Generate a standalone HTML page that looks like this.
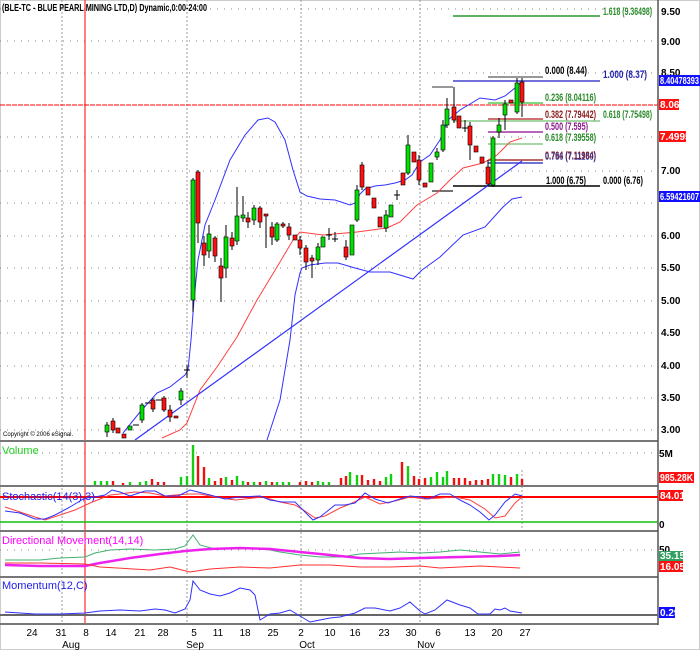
<!DOCTYPE html>
<html><head><meta charset="utf-8"><style>
html,body{margin:0;padding:0;background:#fff;}
svg{display:block;font-family:"Liberation Sans",sans-serif;font-weight:bold;}
.g{fill:#00e000;stroke:#000;stroke-width:.6}
.r{fill:#ff1010;stroke:#000;stroke-width:.6}
.w{stroke:#000;stroke-width:1}
.grid{stroke:#888;stroke-width:1;stroke-dasharray:1 6}
.vg{stroke:#999;stroke-width:1;stroke-dasharray:2 2}
.sep{stroke:#777;stroke-width:2}
.ax{font-size:10px;fill:#000}
.fb{font-size:11px;font-weight:bold}
</style></head><body>
<svg width="700" height="650" viewBox="0 0 700 650" xmlns="http://www.w3.org/2000/svg">
<rect x="0" y="0" width="700" height="650" fill="#fff"/>
<rect x="0.5" y="0.5" width="699" height="649" fill="none" stroke="#ccc"/>
<g class="grid">
<line x1="0" y1="9" x2="655" y2="9"/><line x1="0" y1="41" x2="655" y2="41"/><line x1="0" y1="73" x2="655" y2="73"/>
<line x1="0" y1="137" x2="655" y2="137"/><line x1="0" y1="171" x2="655" y2="171"/><line x1="0" y1="203" x2="655" y2="203"/>
<line x1="0" y1="236" x2="655" y2="236"/><line x1="0" y1="268" x2="655" y2="268"/><line x1="0" y1="301" x2="655" y2="301"/>
<line x1="0" y1="333" x2="655" y2="333"/><line x1="0" y1="366" x2="655" y2="366"/><line x1="0" y1="398" x2="655" y2="398"/>
<line x1="0" y1="430" x2="655" y2="430"/><line x1="0" y1="453" x2="655" y2="453"/><line x1="0" y1="550" x2="655" y2="550"/>
</g>
<g class="vg">
<line x1="62" y1="0" x2="62" y2="624"/><line x1="187" y1="0" x2="187" y2="624"/><line x1="301" y1="0" x2="301" y2="624"/>
<line x1="420" y1="0" x2="420" y2="624"/><line x1="522" y1="470" x2="522" y2="530"/>
</g>
<line x1="85" y1="0" x2="85" y2="624" stroke="#f00" stroke-width="1"/>
<line x1="0" y1="105" x2="658" y2="105" stroke="#f00" stroke-width="1" stroke-dasharray="5 1"/>
<text x="2" y="11" font-size="10" textLength="205" lengthAdjust="spacingAndGlyphs">(BLE-TC - BLUE PEARL MINING LTD,D) Dynamic,0:00-24:00</text>
<line x1="453" y1="16" x2="600" y2="16" stroke="#2a9a2a" stroke-width="1.5"/>
<text class="fb" x="603" y="15" fill="#2a8a2a" textLength="49" lengthAdjust="spacingAndGlyphs">1.618 (9.36498)</text>
<line x1="488" y1="77" x2="543" y2="77" stroke="#777" stroke-width="1.5"/>
<text class="fb" x="545" y="74" fill="#000" textLength="42" lengthAdjust="spacingAndGlyphs">0.000 (8.44)</text>
<line x1="453" y1="81" x2="600" y2="81" stroke="#4444cc" stroke-width="1.5"/>
<text class="fb" x="603" y="78" fill="#2222aa" textLength="44" lengthAdjust="spacingAndGlyphs">1.000 (8.37)</text>
<line x1="432" y1="87" x2="453" y2="87" stroke="#777" stroke-width="1.5"/>
<line x1="488" y1="103" x2="543" y2="103" stroke="#5c5" stroke-width="1.5"/>
<text class="fb" x="545" y="101" fill="#2a8a2a" textLength="51" lengthAdjust="spacingAndGlyphs">0.236 (8.04116)</text>
<line x1="488" y1="119" x2="543" y2="119" stroke="#b44" stroke-width="1.5"/>
<text class="fb" x="545" y="118" fill="#8a1a1a" textLength="51" lengthAdjust="spacingAndGlyphs">0.382 (7.79442)</text>
<line x1="453" y1="121" x2="600" y2="121" stroke="#8c8" stroke-width="1.5"/>
<text class="fb" x="603" y="118" fill="#2a8a2a" textLength="49" lengthAdjust="spacingAndGlyphs">0.618 (7.75498)</text>
<line x1="488" y1="132" x2="543" y2="132" stroke="#a030a0" stroke-width="1.5"/>
<text class="fb" x="545" y="130" fill="#8a1a8a" textLength="43" lengthAdjust="spacingAndGlyphs">0.500 (7.595)</text>
<line x1="488" y1="144" x2="543" y2="144" stroke="#8c8" stroke-width="1.5"/>
<text class="fb" x="545" y="141" fill="#2a8a2a" textLength="51" lengthAdjust="spacingAndGlyphs">0.618 (7.39558)</text>
<line x1="488" y1="160" x2="543" y2="160" stroke="#a33" stroke-width="1.5"/>
<line x1="488" y1="163" x2="543" y2="163" stroke="#44c" stroke-width="1.5"/>
<text class="fb" x="545" y="159" fill="#8a1a1a" textLength="51" lengthAdjust="spacingAndGlyphs">0.764 (7.11984)</text>
<text class="fb" x="545" y="160" fill="#2a2a9a" fill-opacity=".7" textLength="51" lengthAdjust="spacingAndGlyphs">0.786 (7.11160)</text>
<line x1="453" y1="186" x2="600" y2="186" stroke="#000" stroke-width="1.5"/>
<line x1="432" y1="191" x2="453" y2="191" stroke="#444" stroke-width="1.5"/>
<text class="fb" x="546" y="184" fill="#000" textLength="40" lengthAdjust="spacingAndGlyphs">1.000 (6.75)</text>
<text class="fb" x="603" y="184" fill="#000" textLength="40" lengthAdjust="spacingAndGlyphs">0.000 (6.76)</text>
<polyline fill="none" stroke="#3030ff" stroke-width="1" points="123,433 140,412 157,393 170,387 185,375 188,370 191,340 194,300 198,260 205,225 215,200 230,160 245,135 258,120 268,118 275,122 285,140 293,170 300,192 307,196 320,199 335,200 350,205 355,203 360,194 365,189 375,186 385,185 395,183 405,180 412,175 420,162 430,155 440,140 448,120 460,110 480,98 495,100 505,96 515,88 522,82"/>
<polyline fill="none" stroke="#3030ff" stroke-width="1" points="267,440 280,400 290,340 295,295 300,273 302,268 310,265 325,263 338,263 355,268 370,272 390,272 413,279 422,270 440,257 463,235 485,227 503,207 512,199 522,197"/>
<polyline fill="none" stroke="#ff4040" stroke-width="1" points="162,438 180,430 187,423 200,390 217,367 237,337 257,300 277,267 293,240 300,232 323,235 357,232 387,228 400,222 417,205 437,193 450,180 463,168 483,163 497,155 510,142 522,138"/>
<line x1="135" y1="440" x2="522" y2="161" stroke="#3030ff" stroke-width="1.2"/>
<g class="w">
<line x1="107" y1="422" x2="107" y2="437"/><line x1="113" y1="418" x2="113" y2="433"/><line x1="142" y1="403" x2="142" y2="423"/>
<line x1="153" y1="398" x2="153" y2="412"/><line x1="164" y1="396" x2="164" y2="412"/><line x1="170" y1="405" x2="170" y2="422"/>
<line x1="181" y1="388" x2="181" y2="405"/><line x1="187" y1="365" x2="187" y2="378"/><line x1="193" y1="178" x2="193" y2="312"/>
<line x1="198" y1="170" x2="198" y2="243"/><line x1="204" y1="236" x2="204" y2="266"/><line x1="209" y1="225" x2="209" y2="258"/>
<line x1="215" y1="236" x2="215" y2="262"/><line x1="221" y1="258" x2="221" y2="302"/><line x1="226" y1="225" x2="226" y2="278"/>
<line x1="232" y1="232" x2="232" y2="250"/><line x1="237" y1="187" x2="237" y2="245"/><line x1="243" y1="196" x2="243" y2="222"/>
<line x1="248" y1="212" x2="248" y2="228"/><line x1="254" y1="205" x2="254" y2="225"/><line x1="260" y1="206" x2="260" y2="228"/>
<line x1="266" y1="214" x2="266" y2="248"/><line x1="272" y1="222" x2="272" y2="245"/><line x1="277" y1="222" x2="277" y2="242"/>
<line x1="283" y1="222" x2="283" y2="228"/><line x1="289" y1="223" x2="289" y2="240"/><line x1="300" y1="236" x2="300" y2="255"/>
<line x1="306" y1="245" x2="306" y2="270"/><line x1="312" y1="255" x2="312" y2="278"/><line x1="318" y1="243" x2="318" y2="265"/>
<line x1="329" y1="228" x2="329" y2="240"/><line x1="335" y1="232" x2="335" y2="242"/><line x1="346" y1="240" x2="346" y2="260"/>
<line x1="357" y1="185" x2="357" y2="222"/><line x1="362" y1="162" x2="362" y2="190"/><line x1="386" y1="210" x2="386" y2="232"/>
<line x1="397" y1="190" x2="397" y2="200"/><line x1="408" y1="135" x2="408" y2="175"/><line x1="419" y1="155" x2="419" y2="185"/>
<line x1="437" y1="148" x2="437" y2="160"/><line x1="443" y1="120" x2="443" y2="152"/><line x1="447" y1="98" x2="447" y2="128"/>
<line x1="454" y1="87" x2="454" y2="123"/><line x1="465" y1="120" x2="465" y2="132"/><line x1="470" y1="122" x2="470" y2="160"/>
<line x1="488" y1="160" x2="488" y2="186"/><line x1="493" y1="136" x2="493" y2="187"/><line x1="499" y1="118" x2="499" y2="138"/>
<line x1="505" y1="100" x2="505" y2="130"/><line x1="517" y1="78" x2="517" y2="114"/><line x1="522" y1="78" x2="522" y2="117"/>
<line x1="133" y1="425" x2="139" y2="425"/><line x1="145" y1="403" x2="151" y2="403"/><line x1="156" y1="400" x2="162" y2="400"/>
<line x1="184" y1="370" x2="190" y2="370"/><line x1="326" y1="235" x2="332" y2="235"/><line x1="332" y1="239" x2="338" y2="239"/>
<line x1="394" y1="195" x2="400" y2="195"/><line x1="462" y1="128" x2="468" y2="128"/>
</g>
<rect class="g" x="105" y="425" width="4" height="7"/><rect class="r" x="111" y="421" width="4" height="9"/>
<rect class="r" x="116" y="428" width="4" height="5"/><rect class="r" x="122" y="434" width="4" height="4"/>
<rect class="g" x="128" y="426" width="4" height="4"/><rect class="g" x="140" y="405" width="4" height="15"/>
<rect class="r" x="151" y="400" width="4" height="9"/><rect class="r" x="162" y="398" width="4" height="12"/>
<rect class="r" x="168" y="410" width="4" height="7"/><rect class="r" x="174" y="416" width="4" height="2"/>
<rect class="g" x="179" y="391" width="4" height="9"/>
<rect class="g" x="191" y="180" width="4" height="120"/><rect class="r" x="196" y="172" width="4" height="51"/>
<rect class="r" x="202" y="243" width="4" height="12"/><rect class="g" x="207" y="234" width="4" height="17"/>
<rect class="r" x="213" y="238" width="4" height="18"/><rect class="r" x="219" y="266" width="4" height="12"/>
<rect class="g" x="224" y="237" width="4" height="31"/><rect class="r" x="230" y="238" width="4" height="8"/>
<rect class="g" x="235" y="216" width="4" height="25"/><rect class="g" x="241" y="215" width="4" height="3"/>
<rect class="r" x="246" y="218" width="4" height="4"/><rect class="g" x="252" y="208" width="4" height="12"/>
<rect class="r" x="258" y="208" width="4" height="14"/><rect class="r" x="264" y="214" width="4" height="2"/>
<rect class="r" x="270" y="227" width="4" height="10"/><rect class="g" x="275" y="224" width="4" height="16"/>
<rect class="r" x="281" y="224" width="4" height="2"/><rect class="r" x="287" y="227" width="4" height="8"/>
<rect class="r" x="293" y="235" width="4" height="5"/><rect class="r" x="298" y="240" width="4" height="8"/>
<rect class="r" x="304" y="248" width="4" height="14"/><rect class="r" x="310" y="258" width="4" height="3"/>
<rect class="g" x="316" y="247" width="4" height="13"/><rect class="g" x="321" y="237" width="4" height="10"/>
<rect class="r" x="344" y="247" width="4" height="10"/><rect class="g" x="350" y="225" width="4" height="30"/>
<rect class="g" x="355" y="190" width="4" height="30"/><rect class="r" x="360" y="165" width="4" height="22"/>
<rect class="r" x="366" y="187" width="4" height="8"/><rect class="r" x="372" y="198" width="4" height="10"/>
<rect class="r" x="378" y="217" width="4" height="10"/><rect class="g" x="384" y="215" width="4" height="13"/>
<rect class="g" x="389" y="205" width="4" height="12"/><rect class="r" x="401" y="173" width="4" height="12"/>
<rect class="g" x="406" y="145" width="4" height="28"/><rect class="r" x="412" y="152" width="4" height="10"/>
<rect class="r" x="417" y="160" width="4" height="20"/><rect class="r" x="423" y="183" width="4" height="4"/>
<rect class="g" x="429" y="163" width="4" height="19"/><rect class="g" x="435" y="152" width="4" height="5"/>
<rect class="g" x="441" y="125" width="4" height="25"/><rect class="g" x="445" y="109" width="4" height="16"/>
<rect class="r" x="452" y="107" width="4" height="13"/><rect class="r" x="457" y="116" width="4" height="12"/>
<rect class="r" x="468" y="126" width="4" height="19"/><rect class="r" x="474" y="146" width="4" height="6"/>
<rect class="r" x="480" y="157" width="4" height="6"/><rect class="r" x="486" y="167" width="4" height="17"/>
<rect class="g" x="491" y="138" width="4" height="47"/><rect class="g" x="497" y="125" width="4" height="7"/>
<rect class="g" x="503" y="104" width="4" height="11"/><rect class="r" x="509" y="100" width="4" height="3"/>
<rect class="g" x="515" y="83" width="4" height="29"/><rect class="r" x="520" y="82" width="4" height="20"/>
<text x="3" y="436" font-size="6" font-weight="normal" fill="#000">Copyright © 2006 eSignal.</text>
<g class="sep">
<line x1="0" y1="441" x2="658" y2="441"/><line x1="0" y1="486" x2="658" y2="486"/>
<line x1="0" y1="531" x2="658" y2="531"/><line x1="0" y1="577" x2="658" y2="577"/><line x1="0" y1="624" x2="658" y2="624"/>
</g>
<line x1="658" y1="0" x2="658" y2="625" stroke="#555" stroke-width="1.5"/>
<text x="2" y="454" font-size="11" fill="#20d020" font-weight="normal">Volume</text>
<g stroke-width="2.4">
<g stroke="#10d010">
<line x1="95" y1="485" x2="95" y2="481"/><line x1="101" y1="485" x2="101" y2="481"/><line x1="107" y1="485" x2="107" y2="481"/>
<line x1="130" y1="485" x2="130" y2="482"/><line x1="140" y1="485" x2="140" y2="482"/><line x1="146" y1="485" x2="146" y2="481"/>
<line x1="181" y1="485" x2="181" y2="477"/><line x1="187" y1="485" x2="187" y2="476"/><line x1="193" y1="485" x2="193" y2="445"/>
<line x1="209" y1="485" x2="209" y2="478"/><line x1="226" y1="485" x2="226" y2="477"/><line x1="237" y1="485" x2="237" y2="476"/>
<line x1="243" y1="485" x2="243" y2="481"/><line x1="254" y1="485" x2="254" y2="482"/><line x1="266" y1="485" x2="266" y2="481"/>
<line x1="277" y1="485" x2="277" y2="482"/><line x1="283" y1="485" x2="283" y2="482"/><line x1="289" y1="485" x2="289" y2="482"/>
<line x1="318" y1="485" x2="318" y2="481"/><line x1="323" y1="485" x2="323" y2="482"/><line x1="329" y1="485" x2="329" y2="482"/>
<line x1="350" y1="485" x2="350" y2="472"/><line x1="357" y1="485" x2="357" y2="475"/><line x1="386" y1="485" x2="386" y2="477"/>
<line x1="391" y1="485" x2="391" y2="474"/><line x1="408" y1="485" x2="408" y2="466"/><line x1="431" y1="485" x2="431" y2="477"/>
<line x1="437" y1="485" x2="437" y2="472"/><line x1="443" y1="485" x2="443" y2="477"/><line x1="447" y1="485" x2="447" y2="471"/>
<line x1="493" y1="485" x2="493" y2="474"/><line x1="499" y1="485" x2="499" y2="474"/><line x1="505" y1="485" x2="505" y2="475"/>
<line x1="517" y1="485" x2="517" y2="474"/>
</g>
<g stroke="#f01010">
<line x1="113" y1="485" x2="113" y2="481"/><line x1="123" y1="485" x2="123" y2="483"/><line x1="152" y1="485" x2="152" y2="479"/>
<line x1="158" y1="485" x2="158" y2="482"/><line x1="164" y1="485" x2="164" y2="482"/><line x1="198" y1="485" x2="198" y2="456"/>
<line x1="204" y1="485" x2="204" y2="467"/><line x1="215" y1="485" x2="215" y2="481"/><line x1="221" y1="485" x2="221" y2="478"/>
<line x1="232" y1="485" x2="232" y2="480"/><line x1="248" y1="485" x2="248" y2="482"/><line x1="260" y1="485" x2="260" y2="482"/>
<line x1="272" y1="485" x2="272" y2="482"/><line x1="300" y1="485" x2="300" y2="482"/><line x1="306" y1="485" x2="306" y2="481"/>
<line x1="312" y1="485" x2="312" y2="482"/><line x1="341" y1="485" x2="341" y2="478"/><line x1="346" y1="485" x2="346" y2="476"/>
<line x1="362" y1="485" x2="362" y2="475"/><line x1="368" y1="485" x2="368" y2="480"/><line x1="374" y1="485" x2="374" y2="479"/>
<line x1="380" y1="485" x2="380" y2="481"/><line x1="402" y1="485" x2="402" y2="462"/><line x1="414" y1="485" x2="414" y2="476"/>
<line x1="419" y1="485" x2="419" y2="479"/><line x1="425" y1="485" x2="425" y2="478"/><line x1="454" y1="485" x2="454" y2="478"/>
<line x1="459" y1="485" x2="459" y2="478"/><line x1="465" y1="485" x2="465" y2="478"/><line x1="470" y1="485" x2="470" y2="481"/>
<line x1="476" y1="485" x2="476" y2="480"/><line x1="482" y1="485" x2="482" y2="480"/><line x1="488" y1="485" x2="488" y2="479"/>
<line x1="511" y1="485" x2="511" y2="477"/><line x1="522" y1="485" x2="522" y2="479"/>
</g></g>
<line x1="0" y1="497" x2="658" y2="497" stroke="#f00" stroke-width="2"/>
<line x1="0" y1="522" x2="658" y2="522" stroke="#10c010" stroke-width="1.5"/>
<text x="2" y="500" font-size="11" fill="#2020ee" font-weight="normal">Stochastic(14(3),3)</text>
<polyline fill="none" stroke="#ff4040" stroke-width="1" points="5,507 20,512 35,517 45,520 60,515 75,510 90,503 100,499 110,495 120,494 135,492 150,493 165,496 175,495 190,494 200,494 215,497 235,500 245,499 262,497 270,499 280,502 295,505 305,511 315,518 325,516 340,508 350,504 365,497 380,504 395,501 410,497 425,499 440,498 455,497 470,500 485,509 495,518 505,516 515,503 522,497"/>
<polyline fill="none" stroke="#3030ff" stroke-width="1" points="5,511 20,513 35,519 45,519 55,515 70,507 85,498 95,497 105,495 112,490 120,492 130,496 145,491 155,491 165,496 178,496 190,490 198,492 210,495 225,499 240,497 260,496 270,500 282,502 295,502 305,512 313,520 320,517 335,505 345,505 355,503 365,493 375,499 388,503 400,499 410,496 420,497 428,499 440,494 450,494 460,500 470,505 480,512 489,520 495,515 505,502 515,494 522,496"/>
<text x="2" y="544" font-size="11" fill="#ff00ff" font-weight="normal">Directional Movement(14,14)</text>
<polyline fill="none" stroke="#40b070" stroke-width="1" points="5,560 40,560 60,558 85,557 95,553 110,550 130,549 155,550 175,549 185,546 193,535 200,545 215,549 240,549 260,548 280,552 300,555 320,557 340,557 360,554 380,553 400,552 420,553 440,552 460,550 480,552 500,554 520,552"/>
<polyline fill="none" stroke="#ee22ee" stroke-width="2.5" points="5,565 40,566 85,566 100,563 130,558 160,554 185,551 210,549 240,548 270,549 300,552 330,555 360,558 390,559 420,558 460,557 500,556 520,555"/>
<polyline fill="none" stroke="#ff3030" stroke-width="1" points="5,563 40,563 85,564 100,567 150,570 170,567 190,572 210,569 240,567 270,568 300,565 330,565 360,567 390,567 420,566 440,568 460,567 480,566 500,567 520,568"/>
<text x="2" y="589" font-size="11" fill="#2020ee" font-weight="normal">Momentum(12,C)</text>
<line x1="0" y1="615" x2="658" y2="615" stroke="#666" stroke-width="2"/>
<polyline fill="none" stroke="#3030ff" stroke-width="1" points="5,612 20,613 35,614 60,614 85,613 100,611 120,610 140,611 155,609 165,610 175,613 185,609 190,600 193,581 200,590 210,594 220,596 230,593 240,588 250,590 255,595 260,620 270,614 280,613 290,610 300,616 310,622 320,620 330,618 340,617 355,613 365,608 375,608 390,611 400,608 410,602 420,611 425,614 435,610 447,600 460,605 470,608 478,614 490,614 495,609 500,610 505,608 510,611 522,613"/>
<g class="ax">
<text x="661" y="15">9.50</text><text x="661" y="45">9.00</text><text x="661" y="76">8.50</text>
<text x="661" y="174">7.00</text><text x="661" y="239">6.00</text><text x="661" y="271">5.50</text>
<text x="661" y="304">5.00</text><text x="661" y="336">4.50</text><text x="661" y="369">4.00</text>
<text x="661" y="401">3.50</text><text x="661" y="433">3.00</text><text x="659" y="457">5M</text>
<text x="659" y="528">0</text><text x="659" y="553">50</text>
</g>
<rect x="659" y="75" width="41" height="11" fill="#1010ff"/><text x="660" y="84" font-size="10" fill="#fff" textLength="39" lengthAdjust="spacingAndGlyphs">8.40478393</text>
<rect x="659" y="99" width="20" height="11" fill="#ff1010"/><text x="660" y="108" font-size="10" fill="#fff">8.06</text>
<rect x="659" y="131" width="27" height="11" fill="#ff1010"/><text x="660" y="140" font-size="10" fill="#fff">7.4995</text>
<rect x="659" y="191" width="41" height="11" fill="#1010ff"/><text x="660" y="200" font-size="10" fill="#fff" textLength="39" lengthAdjust="spacingAndGlyphs">6.59421607</text>
<rect x="659" y="472" width="35" height="11" fill="#ff1010"/><text x="660" y="481" font-size="10" fill="#fff" textLength="33" lengthAdjust="spacingAndGlyphs">985.28K</text>
<rect x="659" y="490" width="24" height="11" fill="#ff1010"/><text x="660" y="499" font-size="10" fill="#fff">84.01</text>
<rect x="659" y="551" width="24" height="10" fill="#30a060"/><text x="660" y="559" font-size="10" fill="#fff">35.15</text>
<rect x="659" y="561" width="24" height="11" fill="#ff1010"/><text x="660" y="570" font-size="10" fill="#fff">16.05</text>
<rect x="659" y="607" width="16" height="11" fill="#1010ff"/><text x="660" y="616" font-size="10" fill="#fff">0.29</text>
<g font-size="10" font-weight="normal" fill="#000" text-anchor="middle">
<text x="32" y="636">24</text><text x="61" y="636">31</text><text x="86" y="636">8</text><text x="111" y="636">14</text>
<text x="140" y="636">21</text><text x="163" y="636">28</text><text x="194" y="636">5</text><text x="218" y="636">11</text>
<text x="245" y="636">18</text><text x="273" y="636">25</text><text x="301" y="636">2</text><text x="330" y="636">10</text>
<text x="355" y="636">16</text><text x="384" y="636">23</text><text x="411" y="636">30</text><text x="438" y="636">6</text>
<text x="470" y="636">13</text><text x="497" y="636">20</text><text x="525" y="636">27</text>
<text x="71" y="648">Aug</text><text x="195" y="648">Sep</text><text x="307" y="648">Oct</text><text x="426" y="648">Nov</text>
</g>
</svg>
</body></html>
